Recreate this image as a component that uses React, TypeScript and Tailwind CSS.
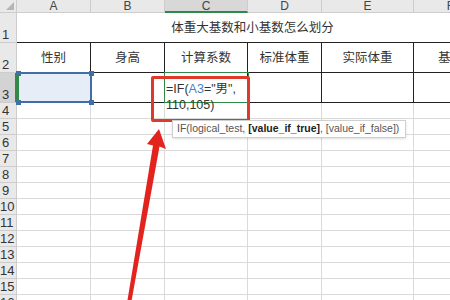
const cols = [
  { key: "A", w: "w-[74px]", title: "性别" },
  { key: "B", w: "w-[74px]", title: "身高" },
  { key: "C", w: "w-[83px]", title: "计算系数" },
  { key: "D", w: "w-[74px]", title: "标准体重" },
  { key: "E", w: "w-[92px]", title: "实际体重" },
  { key: "F", w: "w-[74px]", title: "基数" },
];

const emptyRows = [4, 5, 6, 7, 8, 9, 10, 11, 12, 13, 14, 15, 16];

function RowHead({ n, tall, active }: { n: number; tall?: boolean; active?: boolean }) {
  return (
    <div
      className={`relative flex w-[17px] shrink-0 items-end border-b border-r border-[#cdcdcd] ${
        tall ? "h-[30px]" : "h-[16px]"
      } ${active ? "bg-[#d3d3d3]" : "bg-[#e9e9e9]"}`}
    >
      <span className="w-[11px] text-center text-[13px] leading-[14px] text-[#333]">{n}</span>
      {active && <span className="absolute right-[-1px] top-0 h-full w-[2px] bg-[#2f8a4a]" />}
    </div>
  );
}

export default function App() {
  return (
    <div className="relative h-[300px] w-[450px] overflow-hidden bg-white font-['Liberation_Sans','Noto_Sans_CJK_SC',sans-serif] text-[#333]">
      {/* column header */}
      <div className="flex h-[13px]">
        <div className="relative w-[17px] shrink-0 border-b border-r border-[#cdcdcd] bg-[#e9e9e9]">
          <svg className="absolute right-[2px] top-[2px]" width="8" height="8" viewBox="0 0 8 8">
            <path d="M8 0 L8 8 L0 8 Z" fill="#b5b5b5" />
          </svg>
        </div>
        {cols.map((c) => (
          <div
            key={c.key}
            className={`${c.w} flex shrink-0 items-center justify-center border-r border-[#cdcdcd] text-[12px] leading-none text-[#444] ${
              c.key === "C" ? "border-b-2 border-b-[#2f8a4a] bg-[#d8d8d8]" : "border-b bg-[#e9e9e9]"
            }`}
          >
            {c.key}
          </div>
        ))}
      </div>

      {/* row 1: merged title */}
      <div className="flex h-[30px]">
        <RowHead n={1} tall />
        <div className="flex w-[471px] shrink-0 items-center justify-center border-b border-[#222] font-['Noto_Sans_CJK_SC',sans-serif] text-[12.5px]">
          体重大基数和小基数怎么划分
        </div>
      </div>

      {/* row 2: headings */}
      <div className="flex h-[30px]">
        <RowHead n={2} tall />
        {cols.map((c) => (
          <div
            key={c.key}
            className={`${c.w} flex shrink-0 items-center justify-center border-b border-r border-[#222] font-['Noto_Sans_CJK_SC',sans-serif] text-[12.5px]`}
          >
            {c.title}
          </div>
        ))}
      </div>

      {/* row 3 */}
      <div className="flex h-[30px]">
        <RowHead n={3} tall active />
        {cols.map((c) => (
          <div
            key={c.key}
            className={`${c.w} shrink-0 border-b border-r border-[#222] ${c.key === "A" ? "bg-[#e7edf7]" : ""}`}
          />
        ))}
      </div>

      {/* plain rows */}
      {emptyRows.map((n) => (
        <div key={n} className="flex h-[16px]">
          <RowHead n={n} />
          {cols.map((c) => (
            <div key={c.key} className={`${c.w} shrink-0 border-b border-r border-[#dadada]`} />
          ))}
        </div>
      ))}

      {/* selected cell A3 */}
      <div className="absolute left-[17px] top-[72px] h-[31px] w-[75px] border-2 border-[#3f6fa6]">
        <span className="absolute left-[-3px] top-[-3px] h-[5px] w-[5px] bg-[#3f6fa6]" />
        <span className="absolute right-[-4px] top-[-3px] h-[5px] w-[5px] bg-[#3f6fa6]" />
        <span className="absolute bottom-[-4px] left-[-3px] h-[5px] w-[5px] bg-[#3f6fa6]" />
        <span className="absolute bottom-[-4px] right-[-4px] h-[5px] w-[5px] bg-[#3f6fa6]" />
        <span className="absolute left-[-2px] top-0 h-full w-[2px] bg-[#2f8a4a]" />
      </div>

      {/* editing cell C3 */}
      <div className="absolute left-[164px] top-[72px] h-[31px] w-[85px] border border-[#2f8a4a]" />
      <div className="absolute left-[151px] top-[76px] h-[46px] w-[99px] rounded-[2px] border-[3px] border-[#dd3a2c]" />
      <div className="absolute left-[166px] top-[81px] text-[12.5px] leading-[16px] text-[#333]">
        <div>
          =IF(<span className="text-[#4a7fc4]">A3</span>="男",
        </div>
        <div>110,105)</div>
      </div>

      {/* function hint */}
      <div className="absolute left-[172px] top-[120px] flex h-[18px] w-[234px] items-center whitespace-nowrap border border-[#d0d0d0] bg-white pl-[4px] text-[10.5px] text-[#555] shadow-sm">
        IF(logical_test,&nbsp;<b className="text-[#222]">[value_if_true]</b>,&nbsp;[value_if_false])
      </div>

      {/* red arrow */}
      <svg className="absolute left-0 top-0" width="450" height="300" viewBox="0 0 450 300">
        <polygon
          points="159,129 166,149 159.5,146.5 131.5,301 127.5,300 153,145.5 147,144"
          fill="#e3231d"
        />
      </svg>
    </div>
  );
}
